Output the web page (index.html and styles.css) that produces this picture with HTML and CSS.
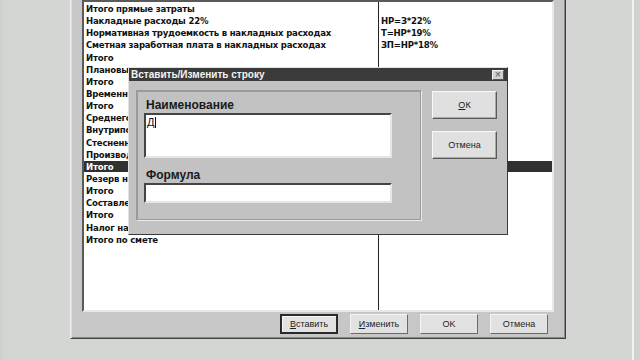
FILE: index.html
```html
<!DOCTYPE html>
<html lang="ru">
<head>
<meta charset="utf-8">
<link rel="stylesheet" href="styles.css">
</head>
<body>
<div class="screen">
  <div class="window">
    <div class="list">
      <div class="row"><span class="c1">Итого прямые затраты</span><span class="c2"></span></div>
      <div class="row"><span class="c1">Накладные расходы 22%</span><span class="c2">НР=З*22%</span></div>
      <div class="row"><span class="c1">Нормативная трудоемкость в накладных расходах</span><span class="c2">Т=НР*19%</span></div>
      <div class="row"><span class="c1">Сметная заработная плата в накладных расходах</span><span class="c2">ЗП=НР*18%</span></div>
      <div class="row"><span class="c1">Итого</span><span class="c2"></span></div>
      <div class="row"><span class="c1">Плановые накопления</span><span class="c2"></span></div>
      <div class="row"><span class="c1">Итого</span><span class="c2"></span></div>
      <div class="row"><span class="c1">Временные здания и сооружения</span><span class="c2"></span></div>
      <div class="row"><span class="c1">Итого</span><span class="c2"></span></div>
      <div class="row"><span class="c1">Среднегодовое удорожание</span><span class="c2"></span></div>
      <div class="row"><span class="c1">Внутрипостроечные перевозки</span><span class="c2"></span></div>
      <div class="row"><span class="c1">Стесненные условия</span><span class="c2"></span></div>
      <div class="row"><span class="c1">Производство работ в зимнее время</span><span class="c2"></span></div>
      <div class="row selected"><span class="c1">Итого</span><span class="c2"></span></div>
      <div class="row"><span class="c1">Резерв на непредвиденные работы</span><span class="c2"></span></div>
      <div class="row"><span class="c1">Итого</span><span class="c2"></span></div>
      <div class="row"><span class="c1">Составление сметной документации</span><span class="c2"></span></div>
      <div class="row"><span class="c1">Итого</span><span class="c2"></span></div>
      <div class="row"><span class="c1">Налог на добавленную стоимость</span><span class="c2"></span></div>
      <div class="row"><span class="c1">Итого по смете</span><span class="c2"></span></div>
    </div>
    <div class="actions">
      <div class="btn default"><u>В</u>ставить</div>
      <div class="btn"><u>И</u>зменить</div>
      <div class="btn">OK</div>
      <div class="btn">Отмена</div>
    </div>
  </div>

  <div class="dialog">
    <div class="titlebar">
      <span class="title">Вставить/Изменить строку</span>
      <span class="close">×</span>
    </div>
    <div class="dbody">
      <div class="group">
        <div class="label">Наименование</div>
        <div class="field big"><span class="typed">Д</span><span class="caret"></span></div>
        <div class="label second">Формула</div>
        <div class="field small"></div>
      </div>
      <div class="dbuttons">
        <div class="dbtn"><u>О</u>К</div>
        <div class="dbtn">Отмена</div>
      </div>
    </div>
  </div>
</div>
</body>
</html>
```

FILE: styles.css
```css
html, body {
  margin: 0;
  padding: 0;
  width: 640px;
  height: 360px;
  overflow: hidden;
  background: #d4d6d4;
  font-family: "Liberation Sans", Arial, sans-serif;
}

.screen {
  position: relative;
  width: 640px;
  height: 360px;
  overflow: hidden;
  background: linear-gradient(to right, #cfd1cf 0, #cfd1cf 3px, #d4d6d4 3px, #d4d6d4 632px, #f2f2f2 632px, #f2f2f2 634px, #d0d2d0 634px);
}

.window {
  margin: -8px 0 0 70px;
  width: 496px;
  height: 347px;
  box-sizing: border-box;
  background: #c6c7c6;
  border: 1px solid;
  border-color: #eeeeee #404040 #404040 #eeeeee;
  box-shadow: inset 1px 1px 0 #dcdcdc, inset -1px -1px 0 #8a8a8a;
  padding: 7px 11px 0 11px;
  display: flex;
  flex-direction: column;
}

.list {
  height: 312px;
  box-sizing: border-box;
  border: 2px solid;
  border-color: #5a5a5a #e8e8e8 #e8e8e8 #5a5a5a;
  background:
    linear-gradient(to right, transparent 294px, #222 294px, #222 295px, transparent 295px),
    #ffffff;
  padding-top: 1px;
  font-family: "DejaVu Sans Condensed", "DejaVu Sans", sans-serif;
  font-stretch: condensed;
  font-size: 9.5px;
  letter-spacing: -0.2px;
  font-weight: bold;
  color: #111;
}

.row {
  height: 12.15px;
  line-height: 12px;
  display: flex;
  white-space: nowrap;
}

.row .c1 {
  width: 294px;
  padding-left: 2px;
  box-sizing: border-box;
  overflow: hidden;
}

.row .c2 {
  padding-left: 3px;
}

.row.selected {
  background: #303030;
  color: #ffffff;
  height: 11px;
  margin-top: 0.5px;
  margin-bottom: 0.65px;
  line-height: 11px;
}

.actions {
  display: flex;
  justify-content: flex-end;
  gap: 12px;
  margin-top: 2px;
  padding-right: 6px;
}

.btn {
  width: 58px;
  height: 20px;
  box-sizing: border-box;
  background: #e2e2e2;
  border: 1px solid;
  border-color: #f6f6f6 #6a6a6a #6a6a6a #f6f6f6;
  font-size: 9px;
  color: #222;
  display: flex;
  align-items: center;
  justify-content: center;
}

.btn.default {
  border: 2px solid #2a2a2a;
  box-shadow: inset 1px 1px 0 #f6f6f6;
}

.btn u, .dbtn u {
  text-decoration: underline;
}

/* dialog overlay */
.dialog {
  position: absolute;
  left: 128px;
  top: 67px;
  width: 380px;
  height: 168px;
  box-sizing: border-box;
  background: #c1c2c1;
  border: 1px solid;
  border-color: #e2e2e2 #3a3a3a #3a3a3a #e2e2e2;
  display: flex;
  flex-direction: column;
}

.titlebar {
  height: 13px;
  background: #3a3b3a;
  display: flex;
  align-items: center;
  justify-content: space-between;
  padding: 0 3px 0 2px;
}

.title {
  color: #f4f4f4;
  font-size: 10px;
  line-height: 12px;
  font-weight: bold;
}

.close {
  width: 12px;
  height: 10px;
  box-sizing: border-box;
  background: #cfcfcf;
  border: 1px solid;
  border-color: #f4f4f4 #555 #555 #f4f4f4;
  font-size: 10px;
  line-height: 8px;
  text-align: center;
  color: #555;
}

.dbody {
  display: flex;
  padding: 9px 0 0 7px;
  gap: 10px;
}

.group {
  width: 286px;
  height: 131px;
  box-sizing: border-box;
  border: 1px solid;
  border-color: #9a9a9a #ececec #ececec #9a9a9a;
  box-shadow: 1px 1px 0 #9a9a9a inset, -1px -1px 0 #9a9a9a inset;
  padding: 7px 0 0 7px;
  display: flex;
  flex-direction: column;
}

.label {
  font-size: 12px;
  font-weight: bold;
  color: #1a1a1a;
  padding-left: 2px;
  height: 15px;
  line-height: 14px;
}

.label.second {
  margin-top: 10px;
}

.field {
  width: 248px;
  box-sizing: border-box;
  background: #ffffff;
  border: 2px solid;
  border-color: #444 #e6e6e6 #e6e6e6 #444;
  font-size: 11px;
  color: #111;
}

.field.big {
  height: 45px;
  padding: 1px 0 0 1px;
  display: flex;
  align-items: flex-start;
}

.typed {
  line-height: 12px;
}

.caret {
  width: 1px;
  height: 11px;
  background: #111;
  margin: 1px 0 0 1px;
}

.field.small {
  height: 20px;
}

.dbuttons {
  display: flex;
  flex-direction: column;
  gap: 12px;
  padding-top: 1px;
}

.dbtn {
  width: 65px;
  height: 28px;
  box-sizing: border-box;
  background: #e0e0e0;
  border: 1px solid;
  border-color: #f8f8f8 #5a5a5a #5a5a5a #f8f8f8;
  box-shadow: inset -1px -1px 0 #a8a8a8;
  font-size: 9px;
  color: #222;
  display: flex;
  align-items: center;
  justify-content: center;
}
```
